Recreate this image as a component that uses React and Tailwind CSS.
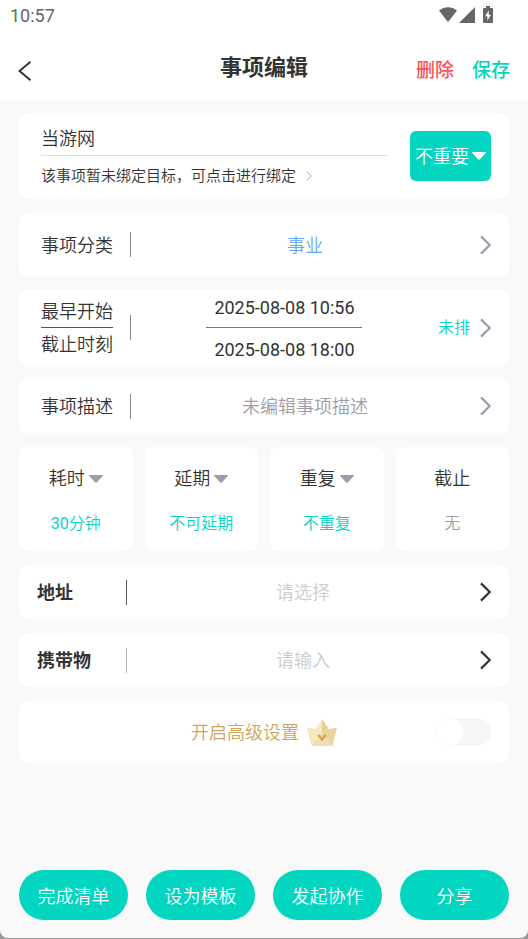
import React, { useState } from "react";

function Chevron({ className = "text-[#9c9cab]" }) {
  return (
    <svg viewBox="0 0 12 20" className={`h-[20px] w-[12px] shrink-0 ${className}`} fill="none" stroke="currentColor" strokeWidth="2.2" aria-hidden="true">
      <path d="M2 1.400 10.700 10 2 18.600" />
    </svg>
  );
}

function Caret({ className = "text-[#9c9cab]" }) {
  return (
    <svg viewBox="0 0 14 8" className={`h-[8px] w-[14px] shrink-0 ${className}`} fill="currentColor" aria-hidden="true">
      <path d="M.6 0h12.8c.6 0 .8.6.4 1L8 7.2c-.6.6-1.4.6-2 0L.2 1C-.2.6 0 0 .6 0Z" />
    </svg>
  );
}

function Crown() {
  return (
    <svg viewBox="0 0 30 27" className="h-[27px] w-[30px]" aria-hidden="true">
      <path d="M0 8.5 10 10.5 15 13.5 25.500 27H5Z" fill="#f3e3bb" />
      <path d="M0 8.500 10 10.5 15 13.500 5 27Z" fill="#f5e7bd" />
      <path d="M5 27 15 13.500 25.500 27Z" fill="#f0deb9" />
      <path d="M30 8.500 20 10.500 15 13.500 25.500 27Z" fill="#ebd39d" />
      <path d="M15 0 8.500 9.500 15 14Z" fill="#f4e8cf" />
      <path d="M15 0 21.500 9.500 15 14Z" fill="#e7cf93" />
      <path d="M11.500 16 15 20.500 18.500 16" fill="none" stroke="#cba45a" strokeWidth="2.600" />
    </svg>
  );
}

function StatusBar() {
  return (
    <div className="flex h-[32px] items-center justify-between pr-[35px] pl-[10px] text-[#666]">
      <span className="text-[18px] leading-[24px] font-normal">10:57</span>
      <div className="flex items-center pb-[3px]">
        <svg viewBox="0 0 18 15" className="h-[15px] w-[18px]" fill="currentColor" aria-hidden="true">
          <path d="M0 3.600C5-1 13-1 18 3.600L9 15Z" />
        </svg>
        <svg viewBox="0 0 16 16" className="ml-[2px] h-[16px] w-[16px]" fill="currentColor" aria-hidden="true">
          <path d="M16 0v16H0Z" />
        </svg>
        <svg viewBox="0 0 10 17" className="ml-[8px] h-[17px] w-[10px]" aria-hidden="true">
          <path d="M3 0h4v2h2q1 0 1 1v13q0 1-1 1H1q-1 0-1-1V3q0-1 1-1h2Z" fill="currentColor" />
          <path d="M5.700 4.500 2.200 10.300h2.200v4.200l3.500-5.700H5.700Z" fill="#fff" />
        </svg>
      </div>
    </div>
  );
}

function Divider({ className = "bg-[#8a8a8a]" }) {
  return <span className={`h-[25px] w-px shrink-0 ${className}`} />;
}

function Row({ label, value, valueClass, height }) {
  return (
    <button type="button" className={`flex w-full items-center rounded-lg bg-white pr-[18px] pl-[22px] ${height}`}>
      <span className="w-[89px] pt-[2px] text-left">{label}</span>
      <Divider />
      <span className={`flex-1 pt-[2px] text-center ${valueClass}`}>{value}</span>
      <Chevron />
    </button>
  );
}

const tiles = [
  { label: "耗时", amount: "30", value: "分钟", caret: true },
  { label: "延期", value: "不可延期", caret: true },
  { label: "重复", value: "不重复", caret: true },
  { label: "截止", value: "无", caret: false },
];

const actions = ["完成清单", "设为模板", "发起协作", "分享"];

export default function App() {
  const [name, setName] = useState("当游网");
  const [items, setItems] = useState("");
  const [advanced, setAdvanced] = useState(false);

  return (
    <div className="min-h-screen bg-[#999] pb-px font-['Roboto','Noto_Sans_CJK_SC',sans-serif] text-[18px] leading-[26px] font-[350] text-[#333]">
      <div className="flex min-h-[calc(100vh-1px)] flex-col rounded-b-lg bg-[#f9f9f9]">
        <header className="bg-white">
          <StatusBar />
          <div className="grid h-[68px] grid-cols-[1fr_auto_1fr] items-center px-[18px]">
            <button type="button" aria-label="返回" className="justify-self-start pt-[9px]">
              <svg viewBox="0 0 14 20" className="h-[20px] w-[14px]" fill="none" stroke="currentColor" strokeWidth="2" aria-hidden="true">
                <path d="M12.500.800 1.500 10l11 9.200" />
              </svg>
            </button>
            <h1 className="pt-[4px] text-[22px] leading-[32px] font-bold">事项编辑</h1>
            <div className="flex gap-[18px] justify-self-end pt-[10px] text-[19px] font-medium">
              <button type="button" className="text-[#ff5158]">删除</button>
              <button type="button" className="text-[#02d5c0]">保存</button>
            </div>
          </div>
        </header>

        <main className="flex flex-col gap-[14px] px-[19px] pt-[13px]">
          <section className="flex items-center rounded-lg bg-white pr-[18px] pl-[22px]">
            <div className="min-w-0 flex-1 pt-[6px] pb-[3px]">
              <input
                aria-label="事项名称"
                value={name}
                onChange={(e) => setName(e.target.value)}
                className="block h-[37px] w-full border-b border-[#e0e0e0] outline-none"
              />
              <button type="button" className="flex h-[40px] items-center gap-[10px] text-[15px]">
                该事项暂未绑定目标，可点击进行绑定
                <svg viewBox="0 0 6 10" className="h-[10px] w-[6px]" fill="none" stroke="#a8a8b4" aria-hidden="true">
                  <path d="M.500.500 5.300 5 .500 9.500" />
                </svg>
              </button>
            </div>
            <button type="button" className="ml-[23px] flex h-[50px] w-[81px] items-center justify-center gap-[3px] rounded-md bg-[#02d5c0] text-white">
              <span className="pt-[2px]">不重要</span>
              <Caret className="text-white" />
            </button>
          </section>

          <Row label="事项分类" value="事业" valueClass="text-[#5fa9f6]" height="h-[63px]" />

          <section className="flex h-[75px] items-center rounded-lg bg-white pr-[18px] pl-[22px]">
            <div className="w-[89px]">
              <div className="w-fit">
                <div className="border-b border-[#555] pt-[2px] leading-[30px]">最早开始</div>
                <div className="pt-[2px] leading-[30px]">截止时刻</div>
              </div>
            </div>
            <Divider />
            <div className="flex flex-1 justify-center">
              <div className="flex w-[156px] flex-col font-normal">
                <button type="button" className="pt-[3px] pb-[6px]">2025-08-08 10:56</button>
                <span className="h-px bg-[#777585]" />
                <button type="button" className="pt-[9px]">2025-08-08 18:00</button>
              </div>
            </div>
            <button type="button" className="flex items-center gap-[9px] text-[16px] text-[#02d5c0]">
              未排
              <Chevron />
            </button>
          </section>

          <Row label="事项描述" value="未编辑事项描述" valueClass="text-[#9c9cab]" height="h-[54px]" />

          <section className="grid grid-cols-4 gap-[12px]">
            {tiles.map((t) => (
              <button key={t.label} type="button" className="flex h-[104px] flex-col items-center gap-[20px] rounded-lg bg-white pt-[19px]">
                <span className="flex items-center gap-[4px]">
                  {t.label}
                  {t.caret && <Caret />}
                </span>
                <span className={`text-[16px] leading-[24px] ${t.caret ? "text-[#02d5c0]" : "text-[#9c9cab]"}`}>
                  {t.amount && <span className="font-normal">{t.amount}</span>}
                  {t.value}
                </span>
              </button>
            ))}
          </section>

          <button type="button" className="flex h-[54px] items-center rounded-lg bg-white pr-[18px] pl-[18px]">
            <span className="w-[89px] pt-[2px] text-left font-bold">地址</span>
            <Divider className="bg-[#555]" />
            <span className="flex-1 pt-[2px] text-center text-[#ccc]">请选择</span>
            <Chevron className="text-[#333]" />
          </button>

          <section className="flex h-[54px] items-center rounded-lg bg-white pr-[18px] pl-[18px]">
            <label htmlFor="carry" className="w-[89px] pt-[2px] font-bold">携带物</label>
            <Divider className="bg-[#bbb]" />
            <input
              id="carry"
              value={items}
              onChange={(e) => setItems(e.target.value)}
              placeholder="请输入"
              className="min-w-0 flex-1 pt-[2px] text-center outline-none placeholder:text-[#ccc]"
            />
            <Chevron className="text-[#333]" />
          </section>

          <section className="grid h-[62px] grid-cols-[1fr_auto_1fr] items-center rounded-lg bg-white px-[18px]">
            <label htmlFor="advanced" className="col-start-2 flex items-center gap-[8px] text-[#cca55c]">
              <span className="pt-[2px]">开启高级设置</span>
              <Crown />
            </label>
            <input
              id="advanced"
              type="checkbox"
              role="switch"
              checked={advanced}
              onChange={(e) => setAdvanced(e.target.checked)}
              className="h-[28px] w-[55px] appearance-none justify-self-end rounded-full bg-[#f6f6f6] before:block before:size-[28px] before:rounded-full before:border before:border-[#fbfbfb] before:bg-white checked:bg-[#02d5c0] checked:before:ml-auto"
            />
          </section>
        </main>

        <footer className="mt-auto grid grid-cols-4 gap-[18px] px-[19px] pt-[24px] pb-[18px]">
          {actions.map((a) => (
            <button key={a} type="button" className="h-[50px] rounded-full bg-[#02d5c0] pt-[4px] text-white">
              {a}
            </button>
          ))}
        </footer>
      </div>
    </div>
  );
}
